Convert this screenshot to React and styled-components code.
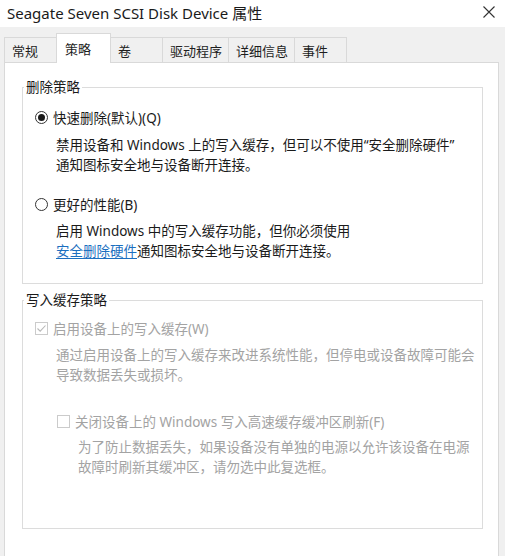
import styled, { createGlobalStyle } from "styled-components"

const GlobalStyle = createGlobalStyle`
  html, body {
    margin: 0;
    padding: 0;
    height: 100%;
  }
  body {
    background: #f0f0f0;
    font-family: "Noto Sans", "Noto Sans CJK SC", sans-serif;
    color: #1a1a1a;
  }
  #root {
    height: 100%;
  }
`

const Window = styled.div`
  display: flex;
  flex-direction: column;
  height: 100vh;
  overflow: hidden;
`
const TitleBar = styled.div`
  height: 27px;
  background: #fff;
  display: flex;
  align-items: center;
  justify-content: space-between;
  padding: 0 10px 0 7px;
  font-size: 15px;
  color: #1a1a1a;
`
const Title = styled.span`
  margin-top: -3px;
`
const Close = styled.span`
  display: flex;
  margin-top: -3px;
`
const Body = styled.div`
  flex: 1;
  display: flex;
  flex-direction: column;
  padding: 6px 6px 0 4px;
  min-height: 0;
`
const TabStrip = styled.div`
  display: flex;
  align-items: flex-end;
  height: 30px;
  margin-bottom: -1px;
  position: relative;
  z-index: 1;
`
const Tab = styled.div`
  box-sizing: border-box;
  display: flex;
  align-items: center;
  min-width: ${p => p.$active ? 55 : 53}px;
  height: ${p => p.$active ? 30 : 25}px;
  margin-bottom: ${p => p.$active ? 0 : 1}px;
  margin-left: -1px;
  padding: ${p => p.$active ? "0 6px 0 8px" : "0 6px 0 7px"};
  border: 1px solid #d9d9d9;
  border-bottom: none;
  background: ${p => p.$active ? "#fff" : "#f0f0f0"};
  font-size: 13px;
  color: #1e1e1e;
  &:first-child {
    margin-left: 0;
  }
`
const Panel = styled.div`
  flex: 1;
  background: #fff;
  border: 1px solid #d9d9d9;
  border-bottom: none;
  padding: 16px 15px 0 17px;
`
const Group = styled.fieldset`
  margin: 0;
  padding: ${p => p.$top}px 0 ${p => p.$bottom}px 0;
  border: 1px solid #dcdcdc;
  min-width: 0;
  & + & {
    margin-top: 8px;
  }
`
const Legend = styled.legend`
  padding: 0 2px;
  margin-left: 1px;
  line-height: 16px;
  font-size: 13.5px;
  color: #1a1a1a;
`
const Option = styled.div`
  display: flex;
  align-items: center;
  gap: 5px;
  height: 20px;
  margin-top: ${p => p.$gap || 0}px;
  padding-left: ${p => p.$indent}px;
  font-size: 13.5px;
  color: ${p => p.$disabled ? "#a3a3a3" : "#1a1a1a"};
  white-space: nowrap;
`
const Radio = styled.span`
  box-sizing: border-box;
  width: 13px;
  height: 13px;
  border-radius: 50%;
  border: 1px solid #333;
  display: flex;
  align-items: center;
  justify-content: center;
  flex: none;
  &::after {
    content: "";
    display: ${p => p.$checked ? "block" : "none"};
    width: 7px;
    height: 7px;
    border-radius: 50%;
    background: #1a1a1a;
  }
`
const Check = styled.span`
  box-sizing: border-box;
  width: 13px;
  height: 13px;
  border: 1px solid #cbcbcb;
  display: flex;
  align-items: center;
  justify-content: center;
  flex: none;
`
const Desc = styled.div`
  margin-top: ${p => p.$gap}px;
  padding-left: ${p => p.$indent}px;
  line-height: 20px;
  font-size: 13.5px;
  color: ${p => p.$disabled ? "#a3a3a3" : "#1a1a1a"};
  white-space: nowrap;
`
const Link = styled.span`
  color: #1c6fc0;
  text-decoration: underline;
  text-underline-offset: 2px;
`

const tabs = ["常规", "策略", "卷", "驱动程序", "详细信息", "事件"]

const App = () => {
  return (
    <Window>
      <GlobalStyle />
      <TitleBar>
        <Title>Seagate Seven SCSI Disk Device 属性</Title>
        <Close>
          <svg width="12" height="12" viewBox="0 0 12 12">
            <path d="M0.5 0.5 L11.5 11.5 M11.5 0.5 L0.5 11.5" stroke="#333" strokeWidth="1.1" />
          </svg>
        </Close>
      </TitleBar>
      <Body>
        <TabStrip>
          {tabs.map(t => (
            <Tab key={t} $active={t === "策略"}>{t}</Tab>
          ))}
        </TabStrip>
        <Panel>
          <Group $top={12} $bottom={22}>
            <Legend>删除策略</Legend>
            <Option $indent={12}>
              <Radio $checked />
              快速删除(默认)(Q)
            </Option>
            <Desc $indent={33} $gap={8}>
              禁用设备和 Windows 上的写入缓存，但可以不使用“安全删除硬件”<br />
              通知图标安全地与设备断开连接。
            </Desc>
            <Option $indent={12} $gap={19}>
              <Radio />
              更好的性能(B)
            </Option>
            <Desc $indent={33} $gap={7}>
              启用 Windows 中的写入缓存功能，但你必须使用<br />
              <Link>安全删除硬件</Link>通知图标安全地与设备断开连接。
            </Desc>
          </Group>
          <Group $top={10} $bottom={51}>
            <Legend>写入缓存策略</Legend>
            <Option $indent={12} $disabled>
              <Check>
                <svg width="11" height="11" viewBox="0 0 11 11">
                  <path d="M1.5 5.5 L4.2 8.2 L9.5 2.5" fill="none" stroke="#b8b8b8" strokeWidth="1.1" />
                </svg>
              </Check>
              启用设备上的写入缓存(W)
            </Option>
            <Desc $indent={33} $gap={7} $disabled>
              通过启用设备上的写入缓存来改进系统性能，但停电或设备故障可能会<br />
              导致数据丢失或损坏。
            </Desc>
            <Option $indent={34} $gap={26} $disabled>
              <Check />
              关闭设备上的 Windows 写入高速缓存缓冲区刷新(F)
            </Option>
            <Desc $indent={55} $gap={6} $disabled>
              为了防止数据丢失，如果设备没有单独的电源以允许该设备在电源<br />
              故障时刷新其缓冲区，请勿选中此复选框。
            </Desc>
          </Group>
        </Panel>
      </Body>
    </Window>
  )
}

export default App
